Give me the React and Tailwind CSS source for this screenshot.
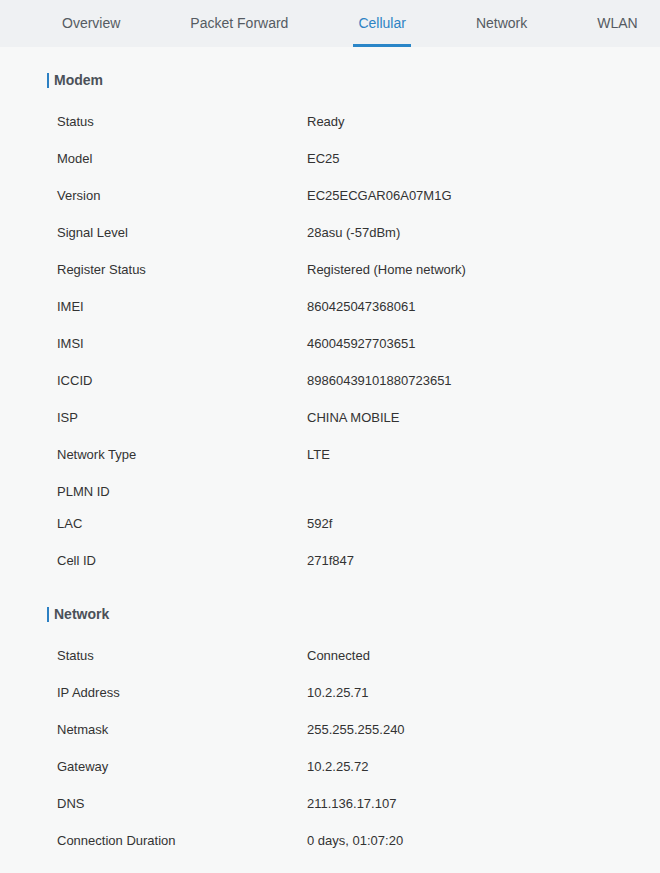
import React from "react";

const tabs = ["Overview", "Packet Forward", "Cellular", "Network", "WLAN"];

const modem = [
  ["Status", "Ready"],
  ["Model", "EC25"],
  ["Version", "EC25ECGAR06A07M1G"],
  ["Signal Level", "28asu (-57dBm)"],
  ["Register Status", "Registered (Home network)"],
  ["IMEI", "860425047368061"],
  ["IMSI", "460045927703651"],
  ["ICCID", "89860439101880723651"],
  ["ISP", "CHINA MOBILE"],
  ["Network Type", "LTE"],
  ["PLMN ID", ""],
  ["LAC", "592f"],
  ["Cell ID", "271f847"],
];

const network = [
  ["Status", "Connected"],
  ["IP Address", "10.2.25.71"],
  ["Netmask", "255.255.255.240"],
  ["Gateway", "10.2.25.72"],
  ["DNS", "211.136.17.107"],
  ["Connection Duration", "0 days, 01:07:20"],
];

function Heading({ children }) {
  return (
    <div className="flex items-center h-[20px] pl-[47px]">
      <div className="w-[2px] h-[15px] bg-[#2c80c3]" />
      <div className="ml-[5px] text-[14px] font-bold text-[#4b5158] leading-[20px]">{children}</div>
    </div>
  );
}

function Rows({ rows }) {
  return (
    <div className="mt-[13px]">
      {rows.map(([k, v]) => (
        <div
          key={k}
          className={`flex pl-[57px] pt-[10px] text-[13px] leading-[17px] text-[#333333] ${v ? "h-[37px]" : "h-[32px]"}`}
        >
          <div className="w-[250px]">{k}</div>
          <div>{v}</div>
        </div>
      ))}
    </div>
  );
}

export default function App() {
  return (
    <div className="w-[660px] h-[873px] bg-[#f7f8f8] overflow-hidden" style={{ fontFamily: '"Liberation Sans", Arial, sans-serif' }}>
      <div className="h-[47px] bg-[#eff1f3] flex pl-[62px] gap-[70px]">
        {tabs.map((t) => {
          const active = t === "Cellular";
          return (
            <div key={t} className="relative h-full flex items-center">
              <span className={`text-[14px] leading-[20px] pb-[1px] ${active ? "text-[#2d83c4]" : "text-[#555b62]"}`}>{t}</span>
              {active && <div className="absolute bottom-0 left-[-5px] right-[-5px] h-[3px] bg-[#2a86c8]" />}
            </div>
          );
        })}
      </div>
      <div className="pt-[23px]">
        <Heading>Modem</Heading>
        <Rows rows={modem} />
        <div className="mt-[25px]">
          <Heading>Network</Heading>
          <Rows rows={network} />
        </div>
      </div>
    </div>
  );
}
